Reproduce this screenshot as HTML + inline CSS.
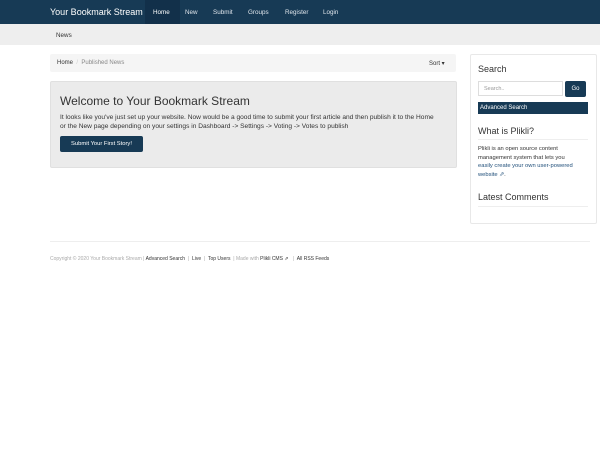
<!DOCTYPE html>
<html><head><style>
body{margin:0;width:600px;height:450px;background:#fff;font-family:"Liberation Sans",sans-serif;position:relative;overflow:hidden;color:#333}
.a{position:absolute}
</style></head><body>
<div class="a" style="left:0;top:0;width:600px;height:24px;background:#173a55"></div>
<div class="a" style="left:145px;top:0;width:35px;height:24px;background:#12304a"></div>
<div class="a" style="left:50px;top:7px;font-size:9px;color:#fff">Your Bookmark Stream</div>
<div class="a" style="left:153px;top:9px;font-size:6.3px;color:#fff">Home</div>
<div class="a" style="left:185px;top:9px;font-size:6.3px;color:#e0e6ec">New</div>
<div class="a" style="left:213px;top:9px;font-size:6.3px;color:#e0e6ec">Submit</div>
<div class="a" style="left:248px;top:9px;font-size:6.3px;color:#e0e6ec">Groups</div>
<div class="a" style="left:285px;top:9px;font-size:6.3px;color:#e0e6ec">Register</div>
<div class="a" style="left:323px;top:9px;font-size:6.3px;color:#e0e6ec">Login</div>
<div class="a" style="left:0;top:24px;width:600px;height:21px;background:#eeeeee"></div>
<div class="a" style="left:56px;top:32px;font-size:6.3px;color:#333">News</div>
<div class="a" style="left:50px;top:54px;width:406px;height:18px;background:#f5f5f5;border-radius:2px"></div>
<div class="a" style="left:57px;top:60px;font-size:6px;color:#333">Home <span style="color:#ccc">&nbsp;/&nbsp;</span> <span style="color:#888">Published News</span></div>
<div class="a" style="left:429px;top:60px;font-size:6px;color:#333">Sort ▾</div>
<div class="a" style="left:50px;top:81px;width:405px;height:85px;background:#ebebeb;border:1px solid #e0e0e0;border-radius:2px"></div>
<div class="a" style="left:60px;top:94px;font-size:12px;color:#333">Welcome to Your Bookmark Stream</div>
<div class="a" style="left:60px;top:113px;width:392px;font-size:6.6px;line-height:9px;color:#333;white-space:nowrap">It looks like you've just set up your website. Now would be a good time to submit your first article and then publish it to the Home<br>or the New page depending on your settings in Dashboard -&gt; Settings -&gt; Voting -&gt; Votes to publish</div>
<div class="a" style="left:60px;top:136px;width:83px;height:16px;background:#173a55;border-radius:2px;color:#fff;font-size:5.8px;line-height:16px;text-align:center">Submit Your First Story!</div>
<div class="a" style="left:470px;top:54px;width:125px;height:168px;border:1px solid #e8e8e8;border-radius:2px"></div>
<div class="a" style="left:478px;top:64px;font-size:9px;color:#333">Search</div>
<div class="a" style="left:478px;top:81px;width:85px;height:15px;border:1px solid #ddd;font-size:5.5px;line-height:15px;color:#999;box-sizing:border-box;padding-left:5px">Search..</div>
<div class="a" style="left:565px;top:81px;width:21px;height:16px;background:#173a55;border-radius:2px;color:#fff;font-size:6px;line-height:16px;text-align:center">Go</div>
<div class="a" style="left:478px;top:102px;width:110px;height:12px;background:#173a55;color:#fff;font-size:6px;line-height:12px;padding-left:2px;box-sizing:border-box">Advanced Search</div>
<div class="a" style="left:478px;top:126px;font-size:9px;color:#333">What is Plikli?</div>
<div class="a" style="left:478px;top:139px;width:110px;height:1px;background:#eee"></div>
<div class="a" style="left:478px;top:145px;width:98px;font-size:5.8px;line-height:8.5px;color:#333">Plikli is an open source content management system that lets you <span style="color:#1f4e79">easily create your own user-powered website ⇗</span>.</div>
<div class="a" style="left:478px;top:192px;font-size:9px;color:#333">Latest Comments</div>
<div class="a" style="left:478px;top:206px;width:110px;height:1px;background:#eee"></div>
<div class="a" style="left:50px;top:241px;width:540px;height:1px;background:#eee"></div>
<div class="a" style="left:50px;top:256px;font-size:5px;color:#aaa;white-space:nowrap">Copyright © 2020 Your Bookmark Stream | <span style="color:#333">Advanced Search</span> &nbsp;| &nbsp;<span style="color:#333">Live</span> &nbsp;| &nbsp;<span style="color:#333">Top Users</span> &nbsp;| Made with <span style="color:#333">Plikli CMS ⇗</span> &nbsp; | &nbsp;<span style="color:#333">All RSS Feeds</span></div>
</body></html>
